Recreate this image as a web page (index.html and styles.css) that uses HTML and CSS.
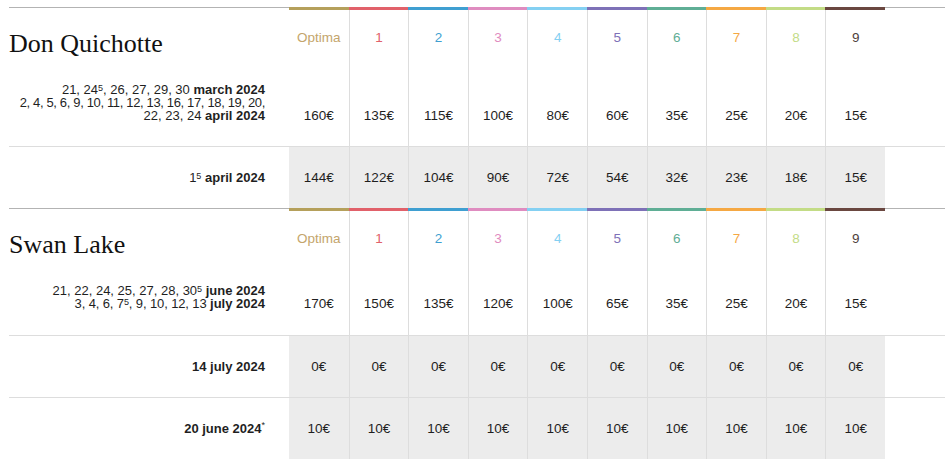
FILE: index.html
```html
<!DOCTYPE html>
<html lang="en">
<head>
<meta charset="utf-8">
<title>Tariffs</title>
<link rel="stylesheet" href="styles.css">
</head>
<body>
<div class="page">
  <section class="show">
    <div class="row head">
      <div class="lead"><h2 class="title">Don Quichotte</h2></div>
      <div class="cat c0"><i class="bar"></i><span class="label">Optima</span></div>
      <div class="cat c1"><i class="bar"></i><span class="label">1</span></div>
      <div class="cat c2"><i class="bar"></i><span class="label">2</span></div>
      <div class="cat c3"><i class="bar"></i><span class="label">3</span></div>
      <div class="cat c4"><i class="bar"></i><span class="label">4</span></div>
      <div class="cat c5"><i class="bar"></i><span class="label">5</span></div>
      <div class="cat c6"><i class="bar"></i><span class="label">6</span></div>
      <div class="cat c7"><i class="bar"></i><span class="label">7</span></div>
      <div class="cat c8"><i class="bar"></i><span class="label">8</span></div>
      <div class="cat c9"><i class="bar"></i><span class="label">9</span></div>
      <div class="fill"></div>
    </div>
    <div class="row">
      <div class="lead dates">
        <span class="ln">21, 24<sup>5</sup>, 26, 27, 29, 30 <b>march 2024</b></span>
        <span class="ln tight">2, 4, 5, 6, 9, 10, 11, 12, 13, 16, 17, 18, 19, 20,</span>
        <span class="ln">22, 23, 24 <b>april 2024</b></span>
      </div>
      <div class="price">160€</div>
      <div class="price">135€</div>
      <div class="price">115€</div>
      <div class="price">100€</div>
      <div class="price">80€</div>
      <div class="price">60€</div>
      <div class="price">35€</div>
      <div class="price">25€</div>
      <div class="price">20€</div>
      <div class="price">15€</div>
      <div class="fill"></div>
    </div>
    <div class="row alt">
      <div class="lead dates">
        <span class="ln">1<sup>5</sup> <b>april 2024</b></span>
      </div>
      <div class="price">144€</div>
      <div class="price">122€</div>
      <div class="price">104€</div>
      <div class="price">90€</div>
      <div class="price">72€</div>
      <div class="price">54€</div>
      <div class="price">32€</div>
      <div class="price">23€</div>
      <div class="price">18€</div>
      <div class="price">15€</div>
      <div class="fill"></div>
    </div>
  </section>

  <section class="show second">
    <div class="row head">
      <div class="lead"><h2 class="title">Swan Lake</h2></div>
      <div class="cat c0"><i class="bar"></i><span class="label">Optima</span></div>
      <div class="cat c1"><i class="bar"></i><span class="label">1</span></div>
      <div class="cat c2"><i class="bar"></i><span class="label">2</span></div>
      <div class="cat c3"><i class="bar"></i><span class="label">3</span></div>
      <div class="cat c4"><i class="bar"></i><span class="label">4</span></div>
      <div class="cat c5"><i class="bar"></i><span class="label">5</span></div>
      <div class="cat c6"><i class="bar"></i><span class="label">6</span></div>
      <div class="cat c7"><i class="bar"></i><span class="label">7</span></div>
      <div class="cat c8"><i class="bar"></i><span class="label">8</span></div>
      <div class="cat c9"><i class="bar"></i><span class="label">9</span></div>
      <div class="fill"></div>
    </div>
    <div class="row first">
      <div class="lead dates">
        <span class="ln">21, 22, 24, 25, 27, 28, 30<sup>5</sup> <b>june 2024</b></span>
        <span class="ln semi">3, 4, 6, 7<sup>5</sup>, 9, 10, 12, 13 <b>july 2024</b></span>
      </div>
      <div class="price">170€</div>
      <div class="price">150€</div>
      <div class="price">135€</div>
      <div class="price">120€</div>
      <div class="price">100€</div>
      <div class="price">65€</div>
      <div class="price">35€</div>
      <div class="price">25€</div>
      <div class="price">20€</div>
      <div class="price">15€</div>
      <div class="fill"></div>
    </div>
    <div class="row alt">
      <div class="lead dates">
        <span class="ln"><b>14 july 2024</b></span>
      </div>
      <div class="price">0€</div>
      <div class="price">0€</div>
      <div class="price">0€</div>
      <div class="price">0€</div>
      <div class="price">0€</div>
      <div class="price">0€</div>
      <div class="price">0€</div>
      <div class="price">0€</div>
      <div class="price">0€</div>
      <div class="price">0€</div>
      <div class="fill"></div>
    </div>
    <div class="row alt">
      <div class="lead dates">
        <span class="ln"><b>20 june 2024</b><sup class="star">*</sup></span>
      </div>
      <div class="price">10€</div>
      <div class="price">10€</div>
      <div class="price">10€</div>
      <div class="price">10€</div>
      <div class="price">10€</div>
      <div class="price">10€</div>
      <div class="price">10€</div>
      <div class="price">10€</div>
      <div class="price">10€</div>
      <div class="price">10€</div>
      <div class="fill"></div>
    </div>
  </section>
</div>
</body>
</html>
```

FILE: styles.css
```css
html, body {
  margin: 0;
  padding: 0;
  background: #ffffff;
}

.page {
  margin: 7px 2px 0 9px;
  font-family: "Liberation Sans", Arial, sans-serif;
  color: #1f1f1f;
}

.show {
  border-top: 1px solid #b3b3b3;
}

.row {
  display: flex;
  align-items: stretch;
}

.row + .row.alt {
  border-top: 1px solid #dddddd;
}

.second .row.first .dates {
  padding-bottom: 25px;
}

.second .row.first .price {
  padding-bottom: 25px;
}

.lead {
  width: 280px;
  flex: 0 0 280px;
  box-sizing: border-box;
}

.fill {
  flex: 1 1 auto;
}

.title {
  margin: 0;
  padding-top: 21px;
  font-family: "Liberation Serif", "Times New Roman", serif;
  font-weight: normal;
  font-size: 26px;
  line-height: 30px;
  color: #111111;
}

.cat,
.price {
  flex: 0 0 59.6px;
  width: 59.6px;
  box-sizing: border-box;
  border-left: 1px solid #dddddd;
}

.cat.c0,
.price:nth-child(2) {
  border-left: 0;
}

.cat {
  display: flex;
  flex-direction: column;
  align-items: center;
}

.bar {
  display: block;
  align-self: stretch;
  height: 3px;
  margin: -1px 0 0 -1px;
  background: var(--c);
}

.cat.c0 .bar {
  margin-left: 0;
}

.label {
  margin-top: 20px;
  font-size: 13.5px;
  line-height: 16px;
  color: var(--t, var(--c));
}

.c0 { --c: #b5a05b; --t: #c4a56c; }
.c1 { --c: #e1616a; }
.c2 { --c: #3f9fd1; }
.c3 { --c: #df8cc0; }
.c4 { --c: #84d0f2; }
.c5 { --c: #7e71b7; }
.c6 { --c: #5fae95; }
.c7 { --c: #f5a843; }
.c8 { --c: #c3dc86; }
.c9 { --c: #6a4740; --t: #4e403c; }

.dates {
  padding: 24px 24px 24px 0;
  text-align: right;
  font-size: 13px;
  line-height: 13px;
  color: #1f1f1f;
}

.dates .ln {
  display: block;
  white-space: nowrap;
}

.dates .ln.tight {
  letter-spacing: -0.35px;
}

.dates .ln.semi {
  letter-spacing: -0.12px;
}

.dates b {
  font-weight: bold;
  letter-spacing: 0;
}

sup {
  font-size: 9px;
  line-height: 0;
  vertical-align: 3.5px;
}

sup.star {
  vertical-align: 5px;
}

.price {
  display: flex;
  align-items: flex-end;
  justify-content: center;
  padding-bottom: 24px;
  font-size: 13.5px;
  line-height: 13px;
  color: #1f1f1f;
}

.alt .price {
  background: #ececec;
}
```
